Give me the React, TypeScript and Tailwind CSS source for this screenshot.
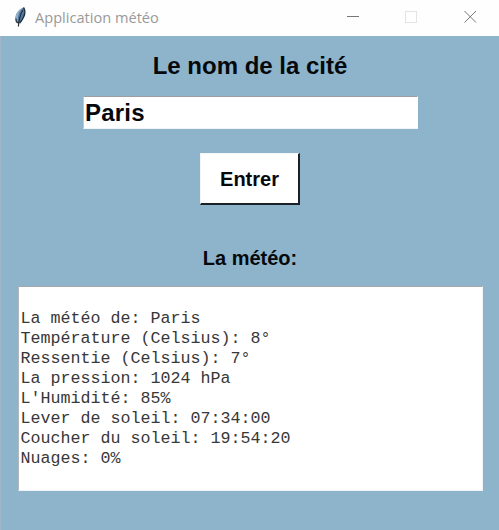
const report = [
  "La météo de: Paris",
  "Température (Celsius): 8°",
  "Ressentie (Celsius): 7°",
  "La pression: 1024 hPa",
  "L'Humidité: 85%",
  "Lever de soleil: 07:34:00",
  "Coucher du soleil: 19:54:20",
  "Nuages: 0%",
];

function Feather() {
  return (
    <svg className="ml-[13px] h-[22px] w-[14px] shrink-0" viewBox="0 0 14 22">
      <path d="M10.5 1.5C12.7 4.5 11.8 10 9 14L6.5 17.5L3 15.5C1 11 4 4 10.5 1.5Z" fill="#51799f" />
      <path d="M10.5 1.5C6 5 4.5 10 4.8 16L3 15C1 10 4.5 4 10.5 1.5Z" fill="#8fb0cc" />
      <path d="M10.5 1.5C13 5 11.6 11 6.8 17" fill="none" stroke="#1e2b3a" strokeWidth="1.3" />
      <path d="M9.8 4C7.5 8 6 12 5.4 20.5M3 12.5L3.4 15.8L5.3 17" fill="none" stroke="#26313c" strokeWidth="1.2" />
    </svg>
  );
}

function TitleBar() {
  return (
    <header className="flex h-9 items-center bg-[#fefefe] pb-[3px]">
      <Feather />
      <h1 className="ml-2 flex-1 whitespace-nowrap font-['Open_Sans',sans-serif] text-[14.6px] leading-5 text-[#999999]">
        Application météo
      </h1>
      <svg className="mr-[22px] h-[13px] w-[131px]" viewBox="0 0 131 13" fill="none" shapeRendering="crispEdges">
        <path d="M1 6.5H13" stroke="#777777" />
        <rect x="59.5" y="1.5" width="11" height="11" stroke="#e4e4e4" />
        <path d="M118.5 1L130 12.5M130 1L118.5 12.5" stroke="#777777" shapeRendering="auto" />
      </svg>
    </header>
  );
}

export default function App() {
  return (
    <div className="flex h-[530px] w-[499px] flex-col overflow-hidden bg-[#8db4cb] font-['Liberation_Sans',Arial,sans-serif] text-[#06090c]">
      <TitleBar />
      <main className="flex flex-1 flex-col items-center border-l border-[#9fb7c7]">
        <label htmlFor="city" className="mt-4 text-2xl leading-7 font-bold">
          Le nom de la cité
        </label>
        <input
          id="city"
          defaultValue="Paris"
          className="mt-4 ml-px h-[33px] w-[335px] border border-t-[#9b9fa3] border-r-white border-b-[#eef3f6] border-l-[#c4c6c7] bg-white px-px text-2xl leading-7 font-bold tracking-[0.2px] outline-none"
        />
        <button className="mt-6 h-[52px] w-[100px] border-t border-r-2 border-b-2 border-l border-t-[#f4f4f4] border-r-[#1b2126] border-b-[#1b2126] border-l-[#f4f4f4] bg-white text-xl leading-6 font-bold">
          Entrer
        </button>
        <h2 className="mt-[41px] text-xl leading-6 font-bold">La météo:</h2>
        <pre className="mt-4 h-[205px] w-[465px] border border-t-[#a4a8ab] border-r-[#eef2f4] border-b-[#eef2f4] border-l-[#b5b8ba] bg-white px-0.5 pt-[22px] font-['Liberation_Mono','Courier_New',monospace] text-[16.67px] leading-5 text-[#383838]">
          {report.join("\n")}
        </pre>
      </main>
    </div>
  );
}
